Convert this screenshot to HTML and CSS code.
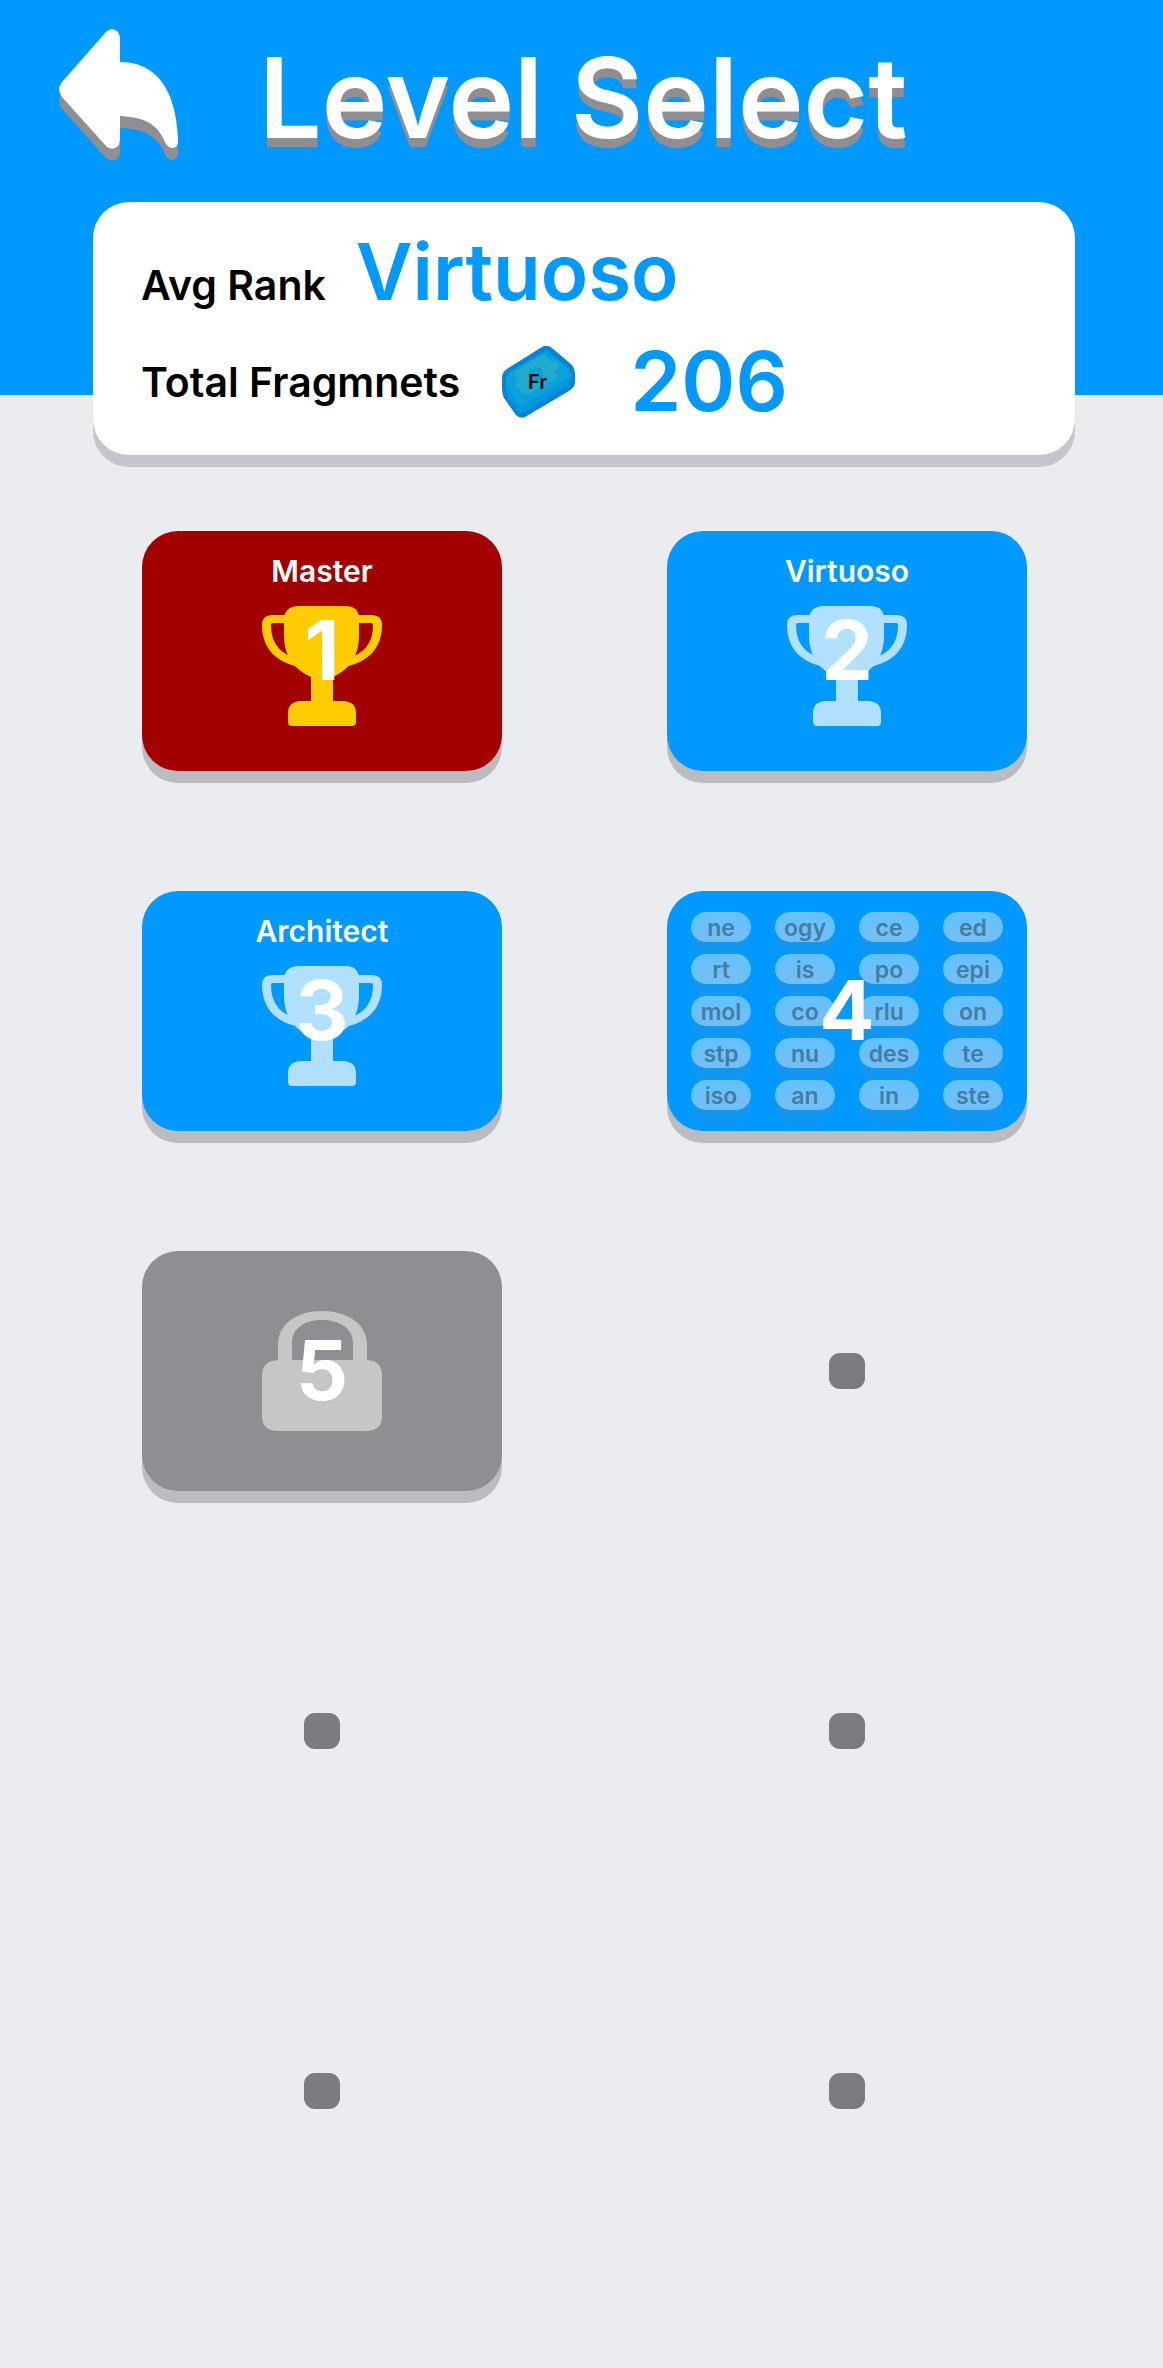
FILE: index.html
```html
<!DOCTYPE html>
<html lang="en">
<head>
<meta charset="utf-8">
<meta name="viewport" content="width=device-width, initial-scale=1">
<title>Level Select</title>
<link rel="stylesheet" href="styles.css">
</head>
<body>
<svg class="defs" aria-hidden="true">
  <symbol id="trophy" viewBox="0 0 120 120">
    <path d="M35 0H85Q97 1 97 13V30Q97 59 71 71V95H82Q94 96 94 107V116Q94 120 90 120H30Q26 120 26 116V107Q26 96 38 95H49V71Q22 59 22 30V13Q23 1 35 0Z"/>
    <path d="M24 9H10Q0 9 0 19C0 44 16 57 38 61L28 50Q9 42 9 19Q9 17 11 17H24Z"/>
    <path d="M96 9H110Q120 9 120 19C120 44 104 57 82 61L92 50Q111 42 111 19Q111 17 109 17H96Z"/>
  </symbol>
</svg>
<header class="top">
  <div class="bar">
    <button class="back" type="button" aria-label="Back">
      <svg viewBox="0 0 120 120"><path d="M47 3Q51 -1 56 1Q61 3 61 10V33C97 33 117 60 119 110C120 121 110 122 106 113C98 94 84 88 61 87V110Q61 117 56 119Q51 121 47 117L3 68Q-3 60 3 53Z"/></svg>
    </button>
    <h1>Level Select</h1>
  </div>
</header>
<main>
  <section class="summary">
    <div class="row rank"><span class="name">Avg Rank</span><strong>Virtuoso</strong></div>
    <div class="row total"><span class="name">Total Fragmnets</span>
      <svg class="gem" viewBox="0 0 74 74" aria-hidden="true">
        <path fill="#0385d7" d="M40 2Q45 -1 50 3L70 20Q73 24 73 30V38Q73 42 67 46L23 72Q18 74 14 70L2 53Q0 49 0 42V33Q0 27 5 24Z"/>
        <path fill="#0397dd" d="M42 7Q45 5 48 8L66 23Q69 27 69 33L66 40L22 67Q18 69 15 65L4 47V34Q5 29 9 26Z"/>
        <path fill="#0ca0dc" d="M42 7Q45 5 48 8L66 23Q69 27 69 32L64 35L20 60Q17 61 15 58L4 38V34Q5 29 9 26Z"/>
        <path fill="#1fabcb" d="M29 16L39 11L44 10L48 17L54 16L57 21L53 28L56 35L49 36L37 43L26 49L22 49L19 45L14 42L15 35L12 27Z"/>
        <circle fill="#0f9fd3" cx="34" cy="29" r="7"/>
        <text x="26" y="44">Fr</text>
      </svg>
      <strong>206</strong></div>
  </section>
  <nav class="levels" aria-label="Levels">
    <button class="level done master" type="button"><span class="title">Master</span><svg class="icon"><use href="#trophy"/></svg><b class="num">1</b></button>
    <button class="level done" type="button"><span class="title">Virtuoso</span><svg class="icon"><use href="#trophy"/></svg><b class="num">2</b></button>
    <button class="level done" type="button"><span class="title">Architect</span><svg class="icon"><use href="#trophy"/></svg><b class="num">3</b></button>
    <button class="level tiles" type="button">
      <span class="tile">ne</span><span class="tile">ogy</span><span class="tile">ce</span><span class="tile">ed</span>
      <span class="tile">rt</span><span class="tile">is</span><span class="tile">po</span><span class="tile">epi</span>
      <span class="tile">mol</span><span class="tile">co</span><span class="tile">rlu</span><span class="tile">on</span>
      <span class="tile">stp</span><span class="tile">nu</span><span class="tile">des</span><span class="tile">te</span>
      <span class="tile">iso</span><span class="tile">an</span><span class="tile">in</span><span class="tile">ste</span>
      <b class="num">4</b>
    </button>
    <button class="level locked" type="button" aria-label="Level 5, locked">
      <svg class="icon" viewBox="0 0 120 120"><path fill-rule="evenodd" d="M16 49V34C16 12 36 0 60 0S105 12 105 34V49Q120 50 120 64V106Q120 120 103 120H17Q0 120 0 106V64Q0 50 16 49ZM30 49H91V32C91 17 77 9 60 9S30 17 30 32Z"/></svg>
      <b class="num">5</b>
    </button>
    <span class="dot"></span>
    <span class="dot"></span>
    <span class="dot"></span>
    <span class="dot"></span>
    <span class="dot"></span>
  </nav>
</main>
</body>
</html>
```
FILE: styles.css
```css
* { box-sizing: border-box; }

body {
  margin: 0;
  min-height: 100vh;
  background: #ebecf0;
  color: #000;
  font-family: Inter, "Liberation Sans", sans-serif;
}

button {
  border: 0;
  padding: 0;
  background: none;
  color: inherit;
  font: inherit;
  cursor: pointer;
}

.defs { display: none; }

.top {
  height: 395px;
  background: #0099ff;
}

.bar {
  display: flex;
  align-items: flex-start;
  gap: 80px;
  padding: 29px 59px 0;
}

.back {
  flex: none;
  width: 120px;
  height: 120px;
}

.back svg {
  display: block;
  overflow: visible;
  fill: #fff;
  filter: drop-shadow(0 12px 0 #8e8e93);
}

h1 {
  margin: 0;
  padding-top: 9px;
  color: #fff;
  font-size: 111px;
  font-weight: 600;
  line-height: 120px;
  white-space: nowrap;
  text-shadow: 0 9px 0 #8e8e93;
}

.summary {
  display: grid;
  gap: 10px;
  margin: -193px 88px 0 93px;
  height: 253px;
  padding: 20px 48px 26px;
  align-content: start;
  border-radius: 36px;
  background: #fff;
  box-shadow: 0 12px 0 #c5c5ca;
}

.row {
  display: flex;
  height: 100px;
}

.rank { align-items: baseline; gap: 30px; }
.total { align-items: center; gap: 42px; }
.total strong { margin-left: 12px; }

.name {
  font-size: 41px;
  font-weight: 600;
}

.row strong {
  color: #0099ff;
  font-size: 82px;
  font-weight: 600;
  line-height: 100px;
}

.rank strong { font-size: 78px; }

.gem {
  width: 74px;
  height: 74px;
}

.gem text {
  font-size: 20px;
  font-weight: 600;
}

.levels {
  display: grid;
  grid-template-columns: 360px 360px;
  justify-content: space-between;
  gap: 120px 0;
  padding: 76px 136px 157px 142px;
}

.level {
  position: relative;
  display: flex;
  flex-direction: column;
  align-items: center;
  justify-content: center;
  height: 240px;
  border-radius: 36px;
  background: #0099ff;
  color: #fff;
  box-shadow: 0 12px 0 #bbbcc1;
}

.done { padding-bottom: 20px; }
.master { background: #a30000; }
.locked { background: #8e8e93; }

.title {
  height: 30px;
  margin-bottom: 20px;
  font-size: 30px;
  font-weight: 600;
  line-height: 30px;
}

.icon {
  display: block;
  width: 120px;
  height: 120px;
  fill: #b2e0ff;
}

.master .icon { fill: #ffcc00; }
.locked .icon { fill: #c6c6c9; }

.num {
  position: absolute;
  inset: 0;
  font-size: 82px;
  font-weight: 700;
  line-height: 240px;
  text-align: center;
}

.tiles {
  display: grid;
  grid-template-columns: repeat(4, 60px);
  grid-auto-rows: 30px;
  gap: 12px 24px;
  align-content: center;
  align-items: stretch;
  isolation: isolate;
}

.tile {
  position: relative;
  border-radius: 15px;
  background: rgba(255, 255, 255, 0.4);
  color: #437da5;
  font-size: 23px;
  font-weight: 600;
  line-height: 32px;
}

.tile::before {
  content: "";
  position: absolute;
  z-index: -1;
  inset: 12px 0 -12px;
  border-radius: 15px;
  background: rgba(142, 142, 147, 0.12);
}

.dot {
  place-self: center;
  width: 36px;
  height: 36px;
  margin: 102px 0;
  border-radius: 11px;
  background: #7b7c80;
}
```
